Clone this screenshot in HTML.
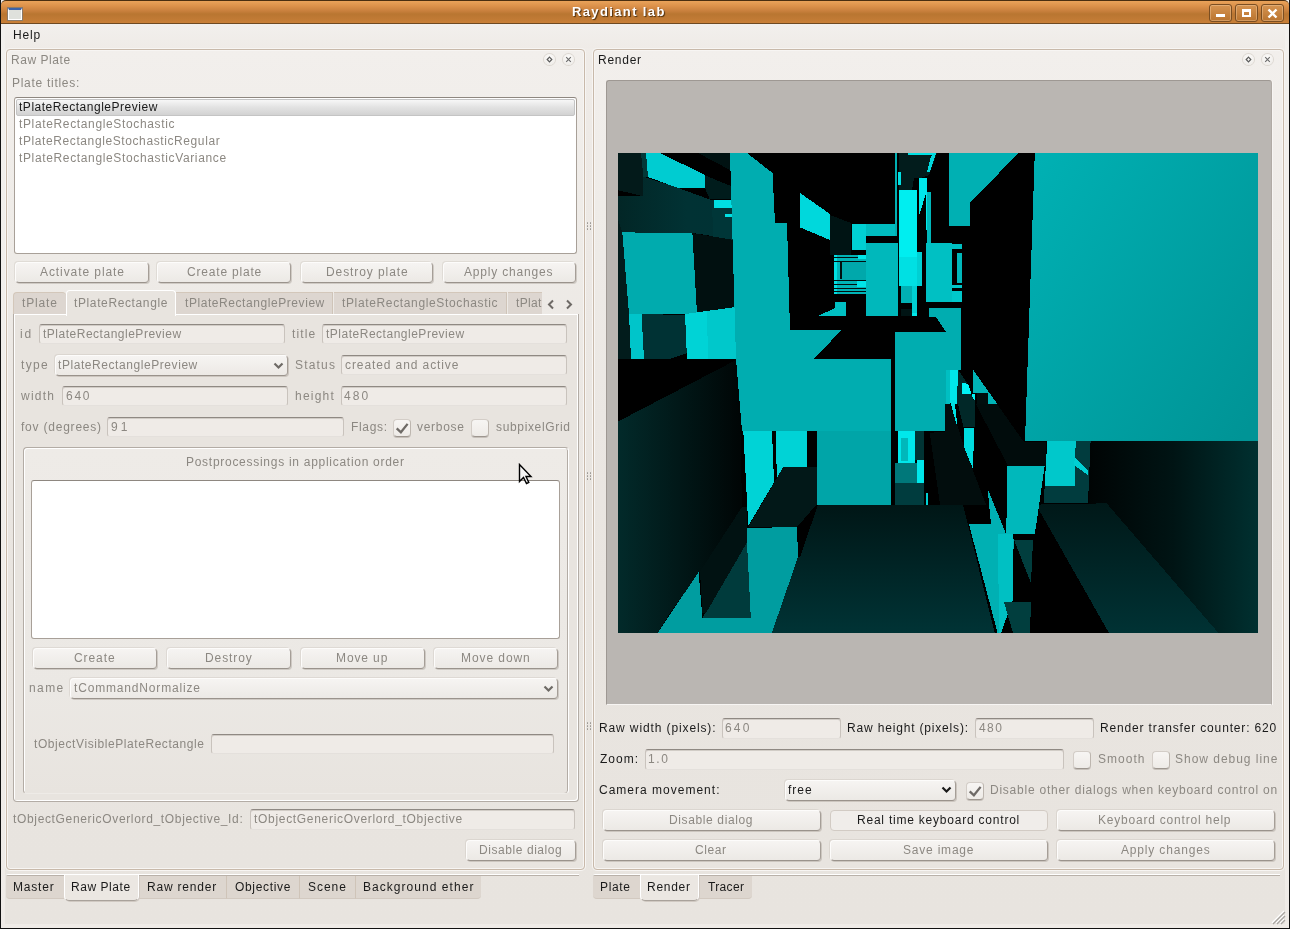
<!DOCTYPE html>
<html><head><meta charset="utf-8">
<style>
*{box-sizing:border-box;margin:0;padding:0}
html,body{width:1290px;height:929px;overflow:hidden;background:#000}
body{font-family:"Liberation Sans",sans-serif;font-size:12px;letter-spacing:.55px;color:#1a1a1a;position:relative}
.a{position:absolute}
#win{position:absolute;left:0;top:0;width:1290px;height:929px;background:linear-gradient(#f2f0ed 0,#efebe7 60px,#ebe7e3 330px,#e9e5e0 500px,#e8e4df 100%);overflow:hidden}
.bk{position:absolute;background:#111}
.tx{position:absolute;white-space:nowrap;line-height:14px;font-size:12px;will-change:transform}
#title{position:absolute;left:1px;top:0;width:1288px;height:24px;border-radius:5px 5px 0 0;
 background:linear-gradient(#e9a35a 0px,#dc914a 5px,#c8803d 10px,#b97631 13px,#c07a35 18px,#cc8238 23px);border-bottom:1px solid #6e4a22;border-top:1px solid #4a2e10}
#title .t{position:absolute;left:571px;top:3px;white-space:nowrap;color:#fff;font-weight:bold;font-size:14px;letter-spacing:.8px;text-shadow:1px 1px 1px #5a3a15}
.wb{position:absolute;top:4px;width:23px;height:18px;border:1px solid #7a4e22;border-radius:3px;background:linear-gradient(#d69451,#b9742f);box-shadow:inset 0 0 0 1px rgba(255,220,180,.35)}
#menubar{position:absolute;left:1px;top:24px;width:1288px;height:24px;background:linear-gradient(#f2f0ed,#efebe7)}
.dock{position:absolute;border:1px solid #c8b9aa;border-radius:4px;background:linear-gradient(#f2efec 0,#eeebe7 25%,#ebe7e3 45%,#e9e5e0 65%,#e8e4df 100%);box-shadow:0 0 0 1px #f7f5f3,inset 0 0 0 1px #f7f5f3}
.btn{position:absolute;border-radius:4px;border:1px solid;border-color:#fdfcfb #a59e97 #9a938c #fdfcfb;background:linear-gradient(#f6f4f2,#ece9e5);box-shadow:-1px -1px 0 rgba(170,160,150,.2),1px 1px 0 rgba(140,130,120,.3)}
.inp{position:absolute;border:1px solid #c9c3bd;border-top-color:#8f8983;border-bottom-color:#e4e0dc;border-radius:3px;background:#efebe7;box-shadow:inset 0 1px 0 rgba(120,110,100,.25)}
.cb{position:absolute;border:1px solid #d3cdc7;border-bottom-color:#9d968f;border-right-color:#bdb6af;border-radius:4px;background:linear-gradient(#f7f5f3,#eeebe7);box-shadow:0 1px 0 rgba(120,110,100,.3)}
.tab{position:absolute;background:#ddd6d0;border-top:1px solid #d3c7ba;border-radius:4px 4px 0 0}
.tabsel{background:#e8e4df;border:1px solid #fff;border-bottom:none}
.btab{position:absolute;top:876px;height:23px;background:#ddd6cf;border-bottom:1px solid #d2c9c0}
.btabsel{position:absolute;top:875px;height:26px;background:#ebe7e2;border:1px solid #fff;border-top:none;border-bottom:1px solid #a9a29b;border-radius:0 0 5px 5px;box-shadow:1px 1px 0 #d0c9c2}
.white{position:absolute;background:#fff;border:1px solid #a8a098;border-top-color:#8e8780;border-radius:3px}
</style></head><body>
<div id="win">
 <div class="bk" style="left:0;top:0;width:1px;height:929px"></div>
 <div class="bk" style="left:1289px;top:0;width:1px;height:929px"></div>
 <div class="bk" style="left:0;top:928px;width:1290px;height:1px"></div>
 <div id="title">
  <div class="a" style="left:7px;top:7px;width:14px;height:12px;background:#dfe1dc;border:1px solid #fff;border-top:2px solid #3b62a8;outline:1px solid #8a7a6a"></div>
  <div class="wb" style="left:1208px;top:3px"><div class="a" style="left:6px;top:9px;width:9px;height:3px;background:#fff"></div></div>
  <div class="wb" style="left:1234px;top:3px"><div class="a" style="left:6px;top:4px;width:9px;height:8px;border:2px solid #fff;border-top-width:3px"></div></div>
  <div class="wb" style="left:1260px;top:3px"><svg class="a" style="left:5px;top:3px" width="11" height="11" viewBox="0 0 11 11"><path d="M1.5 1.5L9.5 9.5M9.5 1.5L1.5 9.5" stroke="#fff" stroke-width="2.4"/></svg></div>
 </div>
 <div id="menubar"></div>
 <div class="dock" style="left:6px;top:49px;width:579px;height:821px;"></div>
 <div class="a" style="left:544px;top:54px;width:11px;height:11px;border-radius:50%;background:radial-gradient(circle at 50% 35%,#fdfcfb,#ebe8e4);box-shadow:0 0 0 1px #dcd7d1"></div>
 <svg class="a" style="left:545px;top:55px" width="9" height="9" viewBox="0 0 9 9"><path d="M4.5 2.2L6.8 4.5L4.5 6.8L2.2 4.5Z" fill="none" stroke="#5a5a5a" stroke-width="1.2"/></svg>
 <div class="a" style="left:563px;top:54px;width:11px;height:11px;border-radius:50%;background:radial-gradient(circle at 50% 35%,#fdfcfb,#ebe8e4);box-shadow:0 0 0 1px #dcd7d1"></div>
 <svg class="a" style="left:564px;top:55px" width="9" height="9" viewBox="0 0 9 9"><path d="M2.2 2.2L6.8 6.8M6.8 2.2L2.2 6.8" stroke="#6a6a6a" stroke-width="1.1"/></svg>
 <div class="white" style="left:14px;top:97px;width:563px;height:157px"></div>
 <div class="a" style="left:16px;top:99px;width:559px;height:17px;border-radius:2px;background:linear-gradient(#f7f7f7,#e2e2e2 50%,#d2d2d2);border:1px solid #c4c4c4"></div>
 <div class="btn" style="left:15px;top:262px;width:133.5px;height:21px;"></div>
 <div class="btn" style="left:157px;top:262px;width:134px;height:21px;"></div>
 <div class="btn" style="left:300.5px;top:262px;width:132.5px;height:21px;"></div>
 <div class="btn" style="left:442.5px;top:262px;width:133px;height:21px;"></div>
 <div class="a" style="left:13px;top:314px;width:566px;height:488px;background:#e8e4df;border:1px solid #b3aca5;border-top:none;border-radius:0 0 4px 4px;box-shadow:inset 1px 1px 0 #fff,inset -1px -1px 0 #fff"></div>
 <div class="tab" style="left:13px;top:292px;width:53px;height:22px;border-left:1px solid #d3c7ba"></div>
 <div class="tab" style="left:176px;top:292px;width:157px;height:22px;border-right:1px solid #cfc4b8;border-radius:0"></div>
 <div class="tab" style="left:334px;top:292px;width:173px;height:22px;border-right:1px solid #cfc4b8;border-radius:0"></div>
 <div class="tab" style="left:508px;top:292px;width:34px;height:22px;border-radius:0"></div>
 <div class="tab tabsel" style="left:66px;top:290px;width:110px;height:26px"></div>
 <svg class="a" style="left:547px;top:299px" width="8" height="11" viewBox="0 0 8 11"><path d="M6 1.5L2 5.5L6 9.5" fill="none" stroke="#6e6a66" stroke-width="2"/></svg>
 <svg class="a" style="left:565px;top:299px" width="8" height="11" viewBox="0 0 8 11"><path d="M2 1.5L6 5.5L2 9.5" fill="none" stroke="#6e6a66" stroke-width="2"/></svg>
 <div class="inp" style="left:39px;top:324px;width:246px;height:20px"></div>
 <div class="inp" style="left:322px;top:324px;width:245px;height:20px"></div>
 <div class="btn" style="left:54.5px;top:355px;width:233.5px;height:20.5px;"></div>
 <svg class="a" style="left:273px;top:361.5px" width="11" height="8" viewBox="0 0 11 8"><path d="M1.5 1.5L5.5 5.5L9.5 1.5" fill="none" stroke="#6e6a66" stroke-width="2.2"/></svg>
 <div class="inp" style="left:341px;top:355px;width:226px;height:20px"></div>
 <div class="inp" style="left:62px;top:386px;width:226px;height:20px"></div>
 <div class="inp" style="left:341px;top:386px;width:226px;height:20px"></div>
 <div class="inp" style="left:107px;top:417px;width:237px;height:20px"></div>
 <div class="cb" style="left:392.5px;top:419px;width:18px;height:18px"></div>
 <svg class="a" style="left:392.5px;top:419px" width="18" height="18" viewBox="0 0 18 18"><path d="M3.7 9.3L7.9 13.3L14.6 4.9" fill="none" stroke="#6e6a66" stroke-width="2.3"/></svg>
 <div class="cb" style="left:471px;top:419px;width:18px;height:18px"></div>
 <div class="a" style="left:23px;top:447px;width:546px;height:347px;border:1px solid #b3aca5;border-right-color:#fff;border-bottom-color:transparent;border-radius:4px;box-shadow:inset 1px 1px 0 #fff,inset -1px 0 0 #b3aca5;background:linear-gradient(#eeebe7,#ebe8e4 70%,#e8e4df)"></div>
 <div class="white" style="left:31px;top:480px;width:529px;height:159px"></div>
 <div class="btn" style="left:33px;top:648px;width:124px;height:21px;"></div>
 <div class="btn" style="left:166.5px;top:648px;width:124.5px;height:21px;"></div>
 <div class="btn" style="left:300.5px;top:648px;width:124px;height:21px;"></div>
 <div class="btn" style="left:433.5px;top:648px;width:124.5px;height:21px;"></div>
 <div class="btn" style="left:70px;top:678px;width:488px;height:20.5px;"></div>
 <svg class="a" style="left:543px;top:684.5px" width="11" height="8" viewBox="0 0 11 8"><path d="M1.5 1.5L5.5 5.5L9.5 1.5" fill="none" stroke="#6e6a66" stroke-width="2.2"/></svg>
 <div class="inp" style="left:211px;top:734px;width:343px;height:20px"></div>
 <div class="inp" style="left:250px;top:809px;width:325px;height:21px"></div>
 <div class="btn" style="left:466px;top:840px;width:109.5px;height:21px;"></div>
 <div class="a" style="left:6px;top:874px;width:573px;height:2px;background:#b9b1a9;border-top:1px solid #fff;border-radius:2px 0 0 0"></div>
 <div class="btab" style="left:6px;width:58px;border-radius:0 0 0 4px"></div>
 <div class="btab" style="left:138px;width:89px;border-right:1px solid #cfc4b8"></div>
 <div class="btab" style="left:227px;width:73px;border-right:1px solid #cfc4b8"></div>
 <div class="btab" style="left:300px;width:56px;border-right:1px solid #cfc4b8"></div>
 <div class="btab" style="left:356px;width:125px;border-radius:0 0 4px 0"></div>
 <div class="btabsel" style="left:64px;width:75px"></div>
 <div class="dock" style="left:593px;top:49px;width:691px;height:821px;"></div>
 <div class="a" style="left:1243px;top:54px;width:11px;height:11px;border-radius:50%;background:radial-gradient(circle at 50% 35%,#fdfcfb,#ebe8e4);box-shadow:0 0 0 1px #dcd7d1"></div>
 <svg class="a" style="left:1244px;top:55px" width="9" height="9" viewBox="0 0 9 9"><path d="M4.5 2.2L6.8 4.5L4.5 6.8L2.2 4.5Z" fill="none" stroke="#5a5a5a" stroke-width="1.2"/></svg>
 <div class="a" style="left:1262px;top:54px;width:11px;height:11px;border-radius:50%;background:radial-gradient(circle at 50% 35%,#fdfcfb,#ebe8e4);box-shadow:0 0 0 1px #dcd7d1"></div>
 <svg class="a" style="left:1263px;top:55px" width="9" height="9" viewBox="0 0 9 9"><path d="M2.2 2.2L6.8 6.8M6.8 2.2L2.2 6.8" stroke="#6a6a6a" stroke-width="1.1"/></svg>
 <div class="a" style="left:606px;top:80px;width:666px;height:625px;background:#bab6b2;border:1px solid #9e9893;border-right-color:#b1aba5;border-bottom-color:#f7f5f3;border-radius:3px 3px 0 0;box-shadow:1px 0 0 #f7f5f3"></div>
 <!--SCENE--><svg width="640" height="480" viewBox="0 0 640 480" shape-rendering="crispEdges" style="position:absolute;left:618px;top:153px">
<defs>
<linearGradient id="gT" x1="0" y1="0" x2="1" y2="0"><stop offset="0" stop-color="#022a2a"/><stop offset="1" stop-color="#000505"/></linearGradient>
<linearGradient id="gB" x1="0" y1="0" x2="1" y2="0"><stop offset="0" stop-color="#022626"/><stop offset="0.6" stop-color="#013234"/><stop offset="1" stop-color="#003234"/></linearGradient>
<linearGradient id="gR" x1="0" y1="0.1" x2="1" y2="0.9"><stop offset="0" stop-color="#00b0b3"/><stop offset="1" stop-color="#009496"/></linearGradient>
<linearGradient id="gBB" x1="0" y1="0" x2="1" y2="0"><stop offset="0" stop-color="#000404"/><stop offset="0.5" stop-color="#001414"/><stop offset="1" stop-color="#003030"/></linearGradient>
<linearGradient id="gAA" x1="0" y1="0" x2="0" y2="1"><stop offset="0" stop-color="#001616"/><stop offset="1" stop-color="#003335"/></linearGradient>
<linearGradient id="gCC" x1="0" y1="0" x2="0" y2="1"><stop offset="0" stop-color="#001818"/><stop offset="1" stop-color="#003234"/></linearGradient>
</defs>
<rect width="640" height="480" fill="#000"/>
<polygon points="0,0 26,0 26,43.4 0,37.2" fill="#031a1a"/>
<polygon points="0,43.4 25.4,43.4 25.4,23.6 59.5,34.7 91.8,46.5 115,47 115,86 74.4,80 4.3,79.4 0,67" fill="url(#gB)"/>
<polygon points="86.8,22.3 114,33.5 114,46 91.8,46.5 86.8,34.7" fill="#001c1c"/>
<polygon points="80,0 112,0 112,17" fill="#001212"/>
<polygon points="23,0 28,0 30,24 25.4,23.6" fill="#023838"/>
<polygon points="28,0 42,0 87,22 87,35 60,35 30,24" fill="#00ccd1"/>
<polygon points="94.3,55.2 114.8,55.2 114.8,86.8 95,86" fill="#003638"/>
<polygon points="96,47 114.8,47 114.8,55 96,55" fill="#00e0e3"/>
<polygon points="106.7,60.8 114.8,60.8 114.8,64 106.7,64" fill="#00e0e3"/>
<polygon points="4.3,79.4 74.4,80 79,161 11,161" fill="#00abae"/>
<polygon points="74.4,80 114.8,86.8 118,154 79,161" fill="#011010"/>
<polygon points="0,67 4.3,79.4 11,161 13,206 0,206" fill="#021c1c"/>
<polygon points="11,161 23.5,161 26,206 13,206" fill="#00c5ca"/>
<polygon points="23.5,161 67,162 69,200 52,206 26,206" fill="#003234"/>
<polygon points="67,161 118,154 118,206 69,206" fill="#00c8cb"/>
<polygon points="67,161 89,158 90,206 69,206" fill="#00d3d6"/>
<polygon points="0,268.5 120,206 121,206 124,354 82,418.6 52,460 39.7,480 0,480" fill="url(#gT)"/>
<polygon points="112,0 129,0 154.5,20 157,69.5 169,69.5 172,177.4 223,177.4 196,206 273,206 273,278.4 124,278.4 118,206" fill="#00adb0"/>
<polygon points="182,40 212,61 212,87 182,74.4" fill="#00d8dc"/>
<polygon points="212,62 233,70 233,102 212,102" fill="#001414"/>
<polygon points="234.3,71.3 279,71.3 279,82.7 248,82.7 248,89.3 234.3,89.3" fill="#00bcbf"/>
<polygon points="234.3,71.3 248,71.3 248,97 234.3,97" fill="#00d0d3"/>
<polygon points="247.8,89.6 279.8,89.6 279.8,162.7 247.8,162.7" fill="#00b8bb"/>
<polygon points="234.3,97 248,97 248,99 234.3,99" fill="#000000"/>
<polygon points="216,102 248,102 248,141 216,141" fill="#00b4b7"/>
<polygon points="216,102 219,102 219,141 216,141" fill="#00e0e3"/>
<polygon points="223,109 248,109 248,127 223,127" fill="#00a8ab"/>
<polygon points="216,104 248,104 248,104.8 216,104.8" fill="#001010"/>
<polygon points="216,108 248,108 248,108.8 216,108.8" fill="#001010"/>
<polygon points="216,127 248,127 248,127.8 216,127.8" fill="#001010"/>
<polygon points="216,131 248,131 248,131.8 216,131.8" fill="#001010"/>
<polygon points="216,135 248,135 248,135.8 216,135.8" fill="#001010"/>
<polygon points="216,138 248,138 248,138.8 216,138.8" fill="#001010"/>
<polygon points="222,109 223.5,109 223.5,126 222,126" fill="#001010"/>
<polygon points="240,102 248,102 248,106 240,106" fill="#00e8eb"/>
<polygon points="239,128 248,128 248,134 239,134" fill="#00e5e8"/>
<polygon points="201,162.5 217,155 217,149 228,149 228,162.5" fill="#00c0c3"/>
<polygon points="277.3,0 279.2,0 279.2,82.7 277.3,82.7" fill="#00b0b3"/>
<polygon points="281,0 319,0 311,22 303,25 296,25 294,36.7 281,36.7" fill="#021c1c"/>
<polygon points="290,0 318,0 318,2 290,2" fill="#00e0e3"/>
<polygon points="313,3 318,0 312,19 309,19" fill="#00d8dc"/>
<polygon points="280.2,19 282.6,19 282.6,32 280.2,32" fill="#00e0e3"/>
<polygon points="281.1,36.7 299,36.7 299,104 281.1,104" fill="#00eef0"/>
<polygon points="281.1,104 299,104 299,133 281.1,133" fill="#00e0e3"/>
<polygon points="283,133 294,133 294,150 283,150" fill="#00b0b3"/>
<polygon points="294,133 299,133 299,160 294,160" fill="#00d0d3"/>
<polygon points="281.1,150 294,150 294,154 281.1,154" fill="#000000"/>
<polygon points="283,156 294,156 294,162.7 283,162.7" fill="#001414"/>
<polygon points="294,160 299,160 299,163 294,163" fill="#00e8eb"/>
<polygon points="300.5,25 308.7,25 308.7,87 300.5,87" fill="#00e8eb"/>
<polygon points="300.5,64.8 307.8,40.6 308.7,87 300.5,87" fill="#000000"/>
<polygon points="299,99.3 304,99.3 304,133 299,133" fill="#00d0d3"/>
<polygon points="308.7,39 312.6,39 312.6,89.6 308.7,89.6" fill="#00b8bb"/>
<polygon points="307.9,89.6 334,89.6 334,148.7 307.9,148.7" fill="#00c0c3"/>
<polygon points="334,91 343.7,91 343.7,96 334,96" fill="#00c0c3"/>
<polygon points="339,100 343.7,100 343.7,130 339,130" fill="#00b8bb"/>
<polygon points="334,132 343.7,132 343.7,135 334,135" fill="#00c8cb"/>
<polygon points="334,138 343.7,138 343.7,148.7 334,148.7" fill="#00c8cb"/>
<polygon points="330.5,0 400.6,0 352,49.6 352,73.2 330.5,73.2" fill="#00b0b3"/>
<polygon points="416.8,0 640,0 640,288.3 407,288.3" fill="url(#gR)"/>
<polygon points="311,154.7 342.5,154.7 342.5,216.7 327.5,216.7 327.5,178 318,163.8 311,163.8" fill="#00adb0"/>
<polygon points="277.4,178.5 327.5,178.5 327.5,278.7 277.4,278.7" fill="#00adb0"/>
<polygon points="327.5,216.7 332.3,216.7 332.3,250.6 327.5,250.6" fill="#00bfc2"/>
<polygon points="340,216.7 349,230 357,250.7 339,250.7" fill="#012a2a"/>
<polygon points="332,216.7 340,216.7 339,250.7 332,250" fill="#00e6ea"/>
<polygon points="344,229.8 350,231 357,250.7 357,241 344,241" fill="#00f2f5"/>
<polygon points="355,216.7 379,250.5 369.5,250.5 369.5,240 355,240" fill="#00b4b7"/>
<polygon points="358.5,240 369.5,240 369.5,250.5 358.5,250.5" fill="#010e0e"/>
<polygon points="125.3,278.4 188.6,278.4 188.6,314.4 165,314.4 130.3,372.7" fill="#00d3d6"/>
<polygon points="154,278.4 157.6,278.4 159,329 156,329" fill="#000000"/>
<polygon points="165,314.4 198.5,314.4 198.5,351.6 179,374 130.3,374" fill="#021818"/>
<polygon points="198.5,278.4 273,278.4 273,351.6 198.5,351.6" fill="#00a5a8"/>
<polygon points="273,206 276.7,206 276.7,351.6 273,351.6" fill="#000000"/>
<polygon points="276.7,278.4 327,278.4 327,351.6 276.7,351.6" fill="#000000"/>
<polygon points="280.4,278.4 296.5,278.4 296.5,310 280.4,310" fill="#00e8eb"/>
<polygon points="283,285 290,285 290,308 283,308" fill="#00b8bb"/>
<polygon points="296.5,278.4 305.7,278.4 305.7,307 296.5,307" fill="#013434"/>
<polygon points="299,307 305.7,307 305.7,330 299,330" fill="#00e8eb"/>
<polygon points="277,310 299,310 299,330 277,330" fill="#00787a"/>
<polygon points="276.7,330 305.7,330 305.7,351.6 276.7,351.6" fill="#003c3e"/>
<polygon points="308,340 310,340 310,351.6 308,351.6" fill="#00d0d3"/>
<polygon points="311.8,279.9 326.7,278.6 326.7,250.7 331.7,250.7 339,271 346,294 354.6,316.5 368,351.8 322,351.8" fill="#020d0d"/>
<polygon points="331.7,247 336.6,247 339.1,271.2 338.5,271.2" fill="#00e0e3"/>
<polygon points="339,247 356.5,247 356.5,273.7 345.3,273.7" fill="#012828"/>
<polygon points="346,274.9 355.9,274.9 355.2,316.5 346,294.1" fill="#00dcdf"/>
<polygon points="357.7,250.7 378.8,250.7 406,289.2 428.4,289.2 428.4,312.8 390,312.8" fill="#010c0c"/>
<polygon points="180,404 198.5,351.6 345,351.6 376.7,480 153.8,480" fill="url(#gAA)"/>
<polygon points="129,375 179,374 180,404 153.8,480 39.7,480 80.6,419 84.4,465 132.8,465 129,389.5" fill="#009da0"/>
<polygon points="84.4,465 129,389.5 132.8,465" fill="#003b3c"/>
<polygon points="82,418.6 124,354 129,354 129,389.5 88,460 84.4,460" fill="#011212"/>
<polygon points="179,374 198.5,351.6 200,351.6 182,404 180,404" fill="#000000"/>
<polygon points="471,288.3 640,288.3 640,480 471,480" fill="url(#gBB)"/>
<polygon points="394,351.6 418,351.6 491,480 392,480" fill="#000000"/>
<polygon points="418,351.6 488.7,350.3 600.4,480 491,480" fill="url(#gCC)"/>
<polygon points="389.5,313 426.7,313 416.8,381.4 388.2,381.4" fill="#00b8bb"/>
<polygon points="429.2,288.3 457.7,288.3 456.5,333 426.7,333" fill="#00c8cb"/>
<polygon points="457.7,288.3 472.6,288.3 470,350.3 425.5,350.3 426.7,333 456.5,333" fill="#013c3e"/>
<polygon points="457,305 470,318 470,322 456,312" fill="#00d0d3"/>
<polygon points="369.6,335.5 388.2,381.4 394.5,381.4 395.7,387 394.5,448 383,480 379.6,480 351,371.4 373,371.4" fill="#00b0b3"/>
<polygon points="380,381.4 394.5,381.4 394.5,448 383,480 381,480" fill="#00c0c3"/>
<polygon points="396,387 415,387 413,430" fill="#013e3e"/>
<polygon points="386,449 413,449 412,480 395,480" fill="#013e3e"/>
</svg><!--/SCENE-->
 <div class="inp" style="left:722px;top:718px;width:119px;height:21px"></div>
 <div class="inp" style="left:975px;top:718px;width:119px;height:21px"></div>
 <div class="inp" style="left:645px;top:749px;width:419px;height:21px"></div>
 <div class="cb" style="left:1073px;top:751px;width:18px;height:18px"></div>
 <div class="cb" style="left:1151.5px;top:751px;width:18px;height:18px"></div>
 <div class="btn" style="left:784.5px;top:780px;width:171px;height:20.5px;"></div>
 <svg class="a" style="left:941px;top:785.5px" width="11" height="8" viewBox="0 0 11 8"><path d="M1.5 1.5L5.5 5.5L9.5 1.5" fill="none" stroke="#1a1a1a" stroke-width="2.2"/></svg>
 <div class="cb" style="left:965.5px;top:781.5px;width:18px;height:18px"></div>
 <svg class="a" style="left:965.5px;top:781.5px" width="18" height="18" viewBox="0 0 18 18"><path d="M3.7 9.3L7.9 13.3L14.6 4.9" fill="none" stroke="#6e6a66" stroke-width="2.3"/></svg>
 <div class="btn" style="left:602.5px;top:810px;width:218px;height:21px;"></div>
 <div class="btn" style="left:829.5px;top:810px;width:218px;height:21px;background:#f0edea;border-color:#d2cbc4;box-shadow:none"></div>
 <div class="btn" style="left:1056.5px;top:810px;width:218px;height:21px;"></div>
 <div class="btn" style="left:602.5px;top:840px;width:218px;height:21px;"></div>
 <div class="btn" style="left:829.5px;top:840px;width:218px;height:21px;"></div>
 <div class="btn" style="left:1056.5px;top:840px;width:218px;height:21px;"></div>
 <div class="a" style="left:593px;top:874px;width:687px;height:2px;background:#b9b1a9;border-top:1px solid #fff;border-radius:2px 0 0 0"></div>
 <div class="btab" style="left:593px;width:47px;border-radius:0 0 0 4px"></div>
 <div class="btab" style="left:699px;width:53px;border-radius:0 0 4px 0"></div>
 <div class="btabsel" style="left:640px;width:59px"></div>
 <div class="a" style="left:1px;top:24px;width:4px;height:904px;background:linear-gradient(#f2f0ed,#efebe7)"></div>
 <div class="a" style="left:1285px;top:24px;width:4px;height:904px;background:linear-gradient(#f2f0ed,#efebe7)"></div>
 <div class="a" style="left:1px;top:924px;width:1288px;height:4px;background:#efebe7"></div>
 <div class="a" style="left:586.5px;top:222px;width:1.6px;height:1.6px;background:#9a9692;border-radius:1px"></div>
 <div class="a" style="left:586.5px;top:225px;width:1.6px;height:1.6px;background:#9a9692;border-radius:1px"></div>
 <div class="a" style="left:586.5px;top:228px;width:1.6px;height:1.6px;background:#9a9692;border-radius:1px"></div>
 <div class="a" style="left:589.5px;top:222px;width:1.6px;height:1.6px;background:#9a9692;border-radius:1px"></div>
 <div class="a" style="left:589.5px;top:225px;width:1.6px;height:1.6px;background:#9a9692;border-radius:1px"></div>
 <div class="a" style="left:589.5px;top:228px;width:1.6px;height:1.6px;background:#9a9692;border-radius:1px"></div>
 <div class="a" style="left:586.5px;top:472px;width:1.6px;height:1.6px;background:#9a9692;border-radius:1px"></div>
 <div class="a" style="left:586.5px;top:475px;width:1.6px;height:1.6px;background:#9a9692;border-radius:1px"></div>
 <div class="a" style="left:586.5px;top:478px;width:1.6px;height:1.6px;background:#9a9692;border-radius:1px"></div>
 <div class="a" style="left:589.5px;top:472px;width:1.6px;height:1.6px;background:#9a9692;border-radius:1px"></div>
 <div class="a" style="left:589.5px;top:475px;width:1.6px;height:1.6px;background:#9a9692;border-radius:1px"></div>
 <div class="a" style="left:589.5px;top:478px;width:1.6px;height:1.6px;background:#9a9692;border-radius:1px"></div>
 <div class="a" style="left:586.5px;top:722px;width:1.6px;height:1.6px;background:#9a9692;border-radius:1px"></div>
 <div class="a" style="left:586.5px;top:725px;width:1.6px;height:1.6px;background:#9a9692;border-radius:1px"></div>
 <div class="a" style="left:586.5px;top:728px;width:1.6px;height:1.6px;background:#9a9692;border-radius:1px"></div>
 <div class="a" style="left:589.5px;top:722px;width:1.6px;height:1.6px;background:#9a9692;border-radius:1px"></div>
 <div class="a" style="left:589.5px;top:725px;width:1.6px;height:1.6px;background:#9a9692;border-radius:1px"></div>
 <div class="a" style="left:589.5px;top:728px;width:1.6px;height:1.6px;background:#9a9692;border-radius:1px"></div>
 <svg class="a" style="left:1270px;top:909px" width="16" height="16" viewBox="0 0 16 16"><g stroke-width="1.3"><path d="M3 15L15 3M7 15L15 7M11 15L15 11" stroke="#fff" transform="translate(-1,-1)"/><path d="M3 15L15 3M7 15L15 7M11 15L15 11" stroke="#a9a5a1"/></g></svg>
 <div class="tx" id="t0" style="left:571.50px;top:4.50px;color:#fff;letter-spacing:1.367px;font-weight:bold;font-size:13px;text-shadow:1px 1px 1px #4a2c0c">Raydiant lab</div>
 <div class="tx" id="t1" style="left:12.90px;top:28.00px;color:#1a1a1a;letter-spacing:0.817px;">Help</div>
 <div class="tx" id="t2" style="left:11.00px;top:53.00px;color:#8c8882;letter-spacing:0.550px;">Raw Plate</div>
 <div class="tx" id="t3" style="left:12.00px;top:76.00px;color:#8c8882;letter-spacing:0.717px;">Plate titles:</div>
 <div class="tx" id="t4" style="left:19.40px;top:99.50px;color:#1a1a1a;letter-spacing:0.521px;">tPlateRectanglePreview</div>
 <div class="tx" id="t5" style="left:19.40px;top:116.50px;color:#8c8882;letter-spacing:0.643px;">tPlateRectangleStochastic</div>
 <div class="tx" id="t6" style="left:19.40px;top:133.50px;color:#8c8882;letter-spacing:0.599px;">tPlateRectangleStochasticRegular</div>
 <div class="tx" id="t7" style="left:19.40px;top:150.50px;color:#8c8882;letter-spacing:0.643px;">tPlateRectangleStochasticVariance</div>
 <div class="tx" id="t8" style="left:40.30px;top:264.50px;color:#8c8882;letter-spacing:0.921px;">Activate plate</div>
 <div class="tx" id="t9" style="left:187.10px;top:264.50px;color:#8c8882;letter-spacing:0.807px;">Create plate</div>
 <div class="tx" id="t10" style="left:326.30px;top:264.50px;color:#8c8882;letter-spacing:0.916px;">Destroy plate</div>
 <div class="tx" id="t11" style="left:464.10px;top:264.50px;color:#8c8882;letter-spacing:0.816px;">Apply changes</div>
 <div class="tx" id="t12" style="left:21.50px;top:295.60px;color:#8c8882;letter-spacing:0.830px;">tPlate</div>
 <div class="tx" id="t13" style="left:73.50px;top:295.60px;color:#8c8882;letter-spacing:0.621px;">tPlateRectangle</div>
 <div class="tx" id="t14" style="left:184.70px;top:295.60px;color:#8c8882;letter-spacing:0.566px;">tPlateRectanglePreview</div>
 <div class="tx" id="t15" style="left:341.90px;top:295.60px;color:#8c8882;letter-spacing:0.643px;">tPlateRectangleStochastic</div>
 <div class="tx" id="t16" style="left:515.50px;top:295.60px;color:#8c8882;letter-spacing:0.350px;">tPlat</div>
 <div class="tx" id="t17" style="left:20.10px;top:326.50px;color:#8c8882;letter-spacing:1.950px;">id</div>
 <div class="tx" id="t18" style="left:42.50px;top:326.50px;color:#8c8882;letter-spacing:0.510px;">tPlateRectanglePreview</div>
 <div class="tx" id="t19" style="left:292.20px;top:326.50px;color:#8c8882;letter-spacing:1.150px;">title</div>
 <div class="tx" id="t20" style="left:325.50px;top:326.50px;color:#8c8882;letter-spacing:0.510px;">tPlateRectanglePreview</div>
 <div class="tx" id="t21" style="left:21.10px;top:357.50px;color:#8c8882;letter-spacing:1.351px;">type</div>
 <div class="tx" id="t22" style="left:57.80px;top:357.50px;color:#8c8882;letter-spacing:0.566px;">tPlateRectanglePreview</div>
 <div class="tx" id="t23" style="left:294.90px;top:357.50px;color:#8c8882;letter-spacing:1.190px;">Status</div>
 <div class="tx" id="t24" style="left:345.10px;top:357.50px;color:#8c8882;letter-spacing:0.903px;">created and active</div>
 <div class="tx" id="t25" style="left:21.10px;top:388.50px;color:#8c8882;letter-spacing:1.250px;">width</div>
 <div class="tx" id="t26" style="left:65.80px;top:388.50px;color:#8c8882;letter-spacing:1.750px;">640</div>
 <div class="tx" id="t27" style="left:294.90px;top:388.50px;color:#8c8882;letter-spacing:1.230px;">height</div>
 <div class="tx" id="t28" style="left:344.00px;top:388.50px;color:#8c8882;letter-spacing:2.050px;">480</div>
 <div class="tx" id="t29" style="left:21.10px;top:419.50px;color:#8c8882;letter-spacing:0.781px;">fov (degrees)</div>
 <div class="tx" id="t30" style="left:110.50px;top:419.50px;color:#8c8882;letter-spacing:3.150px;">91</div>
 <div class="tx" id="t31" style="left:350.90px;top:419.50px;color:#8c8882;letter-spacing:0.670px;">Flags:</div>
 <div class="tx" id="t32" style="left:417.00px;top:419.50px;color:#8c8882;letter-spacing:0.716px;">verbose</div>
 <div class="tx" id="t33" style="left:495.90px;top:419.50px;color:#8c8882;letter-spacing:0.656px;">subpixelGrid</div>
 <div class="tx" id="t34" style="left:186.10px;top:454.50px;color:#8c8882;letter-spacing:0.721px;">Postprocessings in application order</div>
 <div class="tx" id="t35" style="left:74.40px;top:651.00px;color:#8c8882;letter-spacing:0.910px;">Create</div>
 <div class="tx" id="t36" style="left:204.50px;top:651.00px;color:#8c8882;letter-spacing:0.915px;">Destroy</div>
 <div class="tx" id="t37" style="left:336.30px;top:651.00px;color:#8c8882;letter-spacing:0.883px;">Move up</div>
 <div class="tx" id="t38" style="left:460.50px;top:651.00px;color:#8c8882;letter-spacing:0.924px;">Move down</div>
 <div class="tx" id="t39" style="left:29.00px;top:681.00px;color:#8c8882;letter-spacing:1.418px;">name</div>
 <div class="tx" id="t40" style="left:73.50px;top:681.00px;color:#8c8882;letter-spacing:0.828px;">tCommandNormalize</div>
 <div class="tx" id="t41" style="left:33.50px;top:737.00px;color:#8c8882;letter-spacing:0.573px;">tObjectVisiblePlateRectangle</div>
 <div class="tx" id="t42" style="left:12.50px;top:812.00px;color:#8c8882;letter-spacing:0.657px;">tObjectGenericOverlord_tObjective_Id:</div>
 <div class="tx" id="t43" style="left:254.40px;top:812.00px;color:#8c8882;letter-spacing:0.689px;">tObjectGenericOverlord_tObjective</div>
 <div class="tx" id="t44" style="left:478.80px;top:843.00px;color:#8c8882;letter-spacing:0.567px;">Disable dialog</div>
 <div class="tx" id="t45" style="left:13.00px;top:879.50px;color:#1a1a1a;letter-spacing:0.790px;">Master</div>
 <div class="tx" id="t46" style="left:71.20px;top:879.50px;color:#1a1a1a;letter-spacing:0.554px;">Raw Plate</div>
 <div class="tx" id="t47" style="left:147.20px;top:879.50px;color:#1a1a1a;letter-spacing:0.792px;">Raw render</div>
 <div class="tx" id="t48" style="left:234.50px;top:879.50px;color:#1a1a1a;letter-spacing:0.675px;">Objective</div>
 <div class="tx" id="t49" style="left:308.20px;top:879.50px;color:#1a1a1a;letter-spacing:0.950px;">Scene</div>
 <div class="tx" id="t50" style="left:362.50px;top:879.50px;color:#1a1a1a;letter-spacing:1.044px;">Background ether</div>
 <div class="tx" id="t51" style="left:597.70px;top:53.00px;color:#1a1a1a;letter-spacing:0.750px;">Render</div>
 <div class="tx" id="t52" style="left:599.20px;top:721.00px;color:#1a1a1a;letter-spacing:0.883px;">Raw width (pixels):</div>
 <div class="tx" id="t53" style="left:725.30px;top:721.00px;color:#8c8882;letter-spacing:2.150px;">640</div>
 <div class="tx" id="t54" style="left:847.30px;top:721.00px;color:#1a1a1a;letter-spacing:0.825px;">Raw height (pixels):</div>
 <div class="tx" id="t55" style="left:979.20px;top:721.00px;color:#8c8882;letter-spacing:1.450px;">480</div>
 <div class="tx" id="t56" style="left:1100.10px;top:721.00px;color:#1a1a1a;letter-spacing:0.846px;">Render transfer counter: 620</div>
 <div class="tx" id="t57" style="left:600.20px;top:752.00px;color:#1a1a1a;letter-spacing:1.000px;">Zoom:</div>
 <div class="tx" id="t58" style="left:648.30px;top:752.00px;color:#8c8882;letter-spacing:1.650px;">1.0</div>
 <div class="tx" id="t59" style="left:1097.80px;top:752.00px;color:#8c8882;letter-spacing:1.030px;">Smooth</div>
 <div class="tx" id="t60" style="left:1174.50px;top:752.00px;color:#8c8882;letter-spacing:0.978px;">Show debug line</div>
 <div class="tx" id="t61" style="left:599.20px;top:783.00px;color:#1a1a1a;letter-spacing:1.006px;">Camera movement:</div>
 <div class="tx" id="t62" style="left:788.30px;top:783.00px;color:#1a1a1a;letter-spacing:1.016px;">free</div>
 <div class="tx" id="t63" style="left:989.80px;top:783.00px;color:#8c8882;letter-spacing:0.763px;">Disable other dialogs when keyboard control on</div>
 <div class="tx" id="t64" style="left:669.10px;top:813.00px;color:#8c8882;letter-spacing:0.627px;">Disable dialog</div>
 <div class="tx" id="t65" style="left:857.00px;top:813.00px;color:#1a1a1a;letter-spacing:0.782px;">Real time keyboard control</div>
 <div class="tx" id="t66" style="left:1098.30px;top:813.00px;color:#8c8882;letter-spacing:0.790px;">Keyboard control help</div>
 <div class="tx" id="t67" style="left:694.50px;top:843.00px;color:#8c8882;letter-spacing:0.550px;">Clear</div>
 <div class="tx" id="t68" style="left:902.90px;top:843.00px;color:#8c8882;letter-spacing:0.792px;">Save image</div>
 <div class="tx" id="t69" style="left:1121.30px;top:843.00px;color:#8c8882;letter-spacing:0.832px;">Apply changes</div>
 <div class="tx" id="t70" style="left:600.30px;top:879.50px;color:#1a1a1a;letter-spacing:0.650px;">Plate</div>
 <div class="tx" id="t71" style="left:646.50px;top:879.50px;color:#1a1a1a;letter-spacing:0.710px;">Render</div>
 <div class="tx" id="t72" style="left:707.50px;top:879.50px;color:#1a1a1a;letter-spacing:0.350px;">Tracer</div>
 <svg class="a" style="left:518px;top:463px" width="16" height="22" viewBox="0 0 16 22"><path d="M1.5 1.5L1.5 18.5L5.5 14.5L8.5 20.5L10.8 19.5L8 13.5L13 13.5Z" fill="#f4f4f4" stroke="#000" stroke-width="1.4" stroke-linejoin="miter"/></svg>
</div>
</body></html>
